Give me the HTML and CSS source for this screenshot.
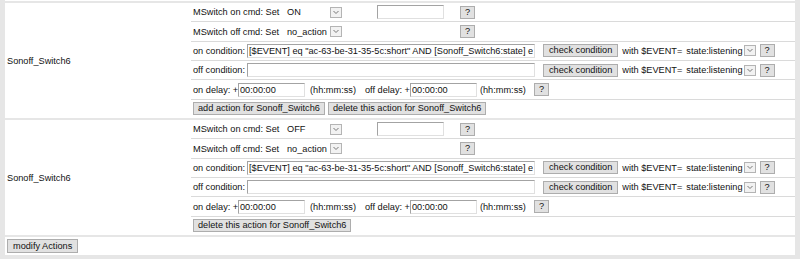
FILE: index.html
```html
<!DOCTYPE html>
<html lang="en">
<head>
    <meta charset="UTF-8">
    <title>MSwitch Actions</title>
    <link rel="stylesheet" href="styles.css">
</head>
<body>
    <div class="page">
        <div class="cut"></div>

        <!-- first action -->
        <div class="device">
            <div class="device-name">Sonoff_Switch6</div>
            <div class="device-cmds">
                <div class="cmd-line">
                    <span class="set-label">MSwitch on cmd: Set</span>
                    <span class="set-cell">
                        <span class="select set-select"><span class="select-value">ON</span><span class="select-arrow"><svg width="10" height="9" viewBox="0 0 10 9"><polyline points="2.5,3 5,5.5 7.5,3" fill="none" stroke="#777" stroke-width="1"/></svg></span></span>
                    </span>
                    <span class="args-cell"><input class="field args-field" type="text" value=""></span>
                    <button class="btn help">?</button>
                </div>
                <div class="cmd-line">
                    <span class="set-label">MSwitch off cmd: Set</span>
                    <span class="set-cell">
                        <span class="select set-select"><span class="select-value">no_action</span><span class="select-arrow"><svg width="10" height="9" viewBox="0 0 10 9"><polyline points="2.5,3 5,5.5 7.5,3" fill="none" stroke="#777" stroke-width="1"/></svg></span></span>
                    </span>
                    <span class="args-cell"></span>
                    <button class="btn help">?</button>
                </div>
                <div class="cmd-line">
                    <span class="cond-label">on condition:</span>
                    <input class="field cond-field" type="text" value='[$EVENT] eq "ac-63-be-31-35-5c:short" AND [Sonoff_Switch6:state] eq "off"'>
                    <button class="btn check">check condition</button>
                    <span class="event-label">with $EVENT=</span>
                    <span class="select event-select"><span class="select-value">state:listening</span><span class="select-arrow"><svg width="10" height="9" viewBox="0 0 10 9"><polyline points="2.5,3 5,5.5 7.5,3" fill="none" stroke="#777" stroke-width="1"/></svg></span></span>
                    <button class="btn help near">?</button>
                </div>
                <div class="cmd-line">
                    <span class="cond-label">off condition:</span>
                    <input class="field cond-field" type="text" value="">
                    <button class="btn check">check condition</button>
                    <span class="event-label">with $EVENT=</span>
                    <span class="select event-select"><span class="select-value">state:listening</span><span class="select-arrow"><svg width="10" height="9" viewBox="0 0 10 9"><polyline points="2.5,3 5,5.5 7.5,3" fill="none" stroke="#777" stroke-width="1"/></svg></span></span>
                    <button class="btn help near">?</button>
                </div>
                <div class="cmd-line">
                    <span class="delay-label">on delay: +</span>
                    <input class="field delay-field" type="text" value="00:00:00">
                    <span class="unit">(hh:mm:ss)</span>
                    <span class="delay-label off">off delay: +</span>
                    <input class="field delay-field" type="text" value="00:00:00">
                    <span class="unit tight">(hh:mm:ss)</span>
                    <button class="btn help delay-help">?</button>
                </div>
                <div class="cmd-line">
                    <button class="btn action">add action for Sonoff_Switch6</button>
                    <button class="btn action">delete this action for Sonoff_Switch6</button>
                </div>
            </div>
        </div>

        <!-- second action -->
        <div class="device">
            <div class="device-name">Sonoff_Switch6</div>
            <div class="device-cmds">
                <div class="cmd-line">
                    <span class="set-label">MSwitch on cmd: Set</span>
                    <span class="set-cell">
                        <span class="select set-select"><span class="select-value">OFF</span><span class="select-arrow"><svg width="10" height="9" viewBox="0 0 10 9"><polyline points="2.5,3 5,5.5 7.5,3" fill="none" stroke="#777" stroke-width="1"/></svg></span></span>
                    </span>
                    <span class="args-cell"><input class="field args-field" type="text" value=""></span>
                    <button class="btn help">?</button>
                </div>
                <div class="cmd-line">
                    <span class="set-label">MSwitch off cmd: Set</span>
                    <span class="set-cell">
                        <span class="select set-select"><span class="select-value">no_action</span><span class="select-arrow"><svg width="10" height="9" viewBox="0 0 10 9"><polyline points="2.5,3 5,5.5 7.5,3" fill="none" stroke="#777" stroke-width="1"/></svg></span></span>
                    </span>
                    <span class="args-cell"></span>
                    <button class="btn help">?</button>
                </div>
                <div class="cmd-line">
                    <span class="cond-label">on condition:</span>
                    <input class="field cond-field" type="text" value='[$EVENT] eq "ac-63-be-31-35-5c:short" AND [Sonoff_Switch6:state] eq "on"'>
                    <button class="btn check">check condition</button>
                    <span class="event-label">with $EVENT=</span>
                    <span class="select event-select"><span class="select-value">state:listening</span><span class="select-arrow"><svg width="10" height="9" viewBox="0 0 10 9"><polyline points="2.5,3 5,5.5 7.5,3" fill="none" stroke="#777" stroke-width="1"/></svg></span></span>
                    <button class="btn help near">?</button>
                </div>
                <div class="cmd-line">
                    <span class="cond-label">off condition:</span>
                    <input class="field cond-field" type="text" value="">
                    <button class="btn check">check condition</button>
                    <span class="event-label">with $EVENT=</span>
                    <span class="select event-select"><span class="select-value">state:listening</span><span class="select-arrow"><svg width="10" height="9" viewBox="0 0 10 9"><polyline points="2.5,3 5,5.5 7.5,3" fill="none" stroke="#777" stroke-width="1"/></svg></span></span>
                    <button class="btn help near">?</button>
                </div>
                <div class="cmd-line">
                    <span class="delay-label">on delay: +</span>
                    <input class="field delay-field" type="text" value="00:00:00">
                    <span class="unit">(hh:mm:ss)</span>
                    <span class="delay-label off">off delay: +</span>
                    <input class="field delay-field" type="text" value="00:00:00">
                    <span class="unit tight">(hh:mm:ss)</span>
                    <button class="btn help delay-help">?</button>
                </div>
                <div class="cmd-line">
                    <button class="btn action">delete this action for Sonoff_Switch6</button>
                </div>
            </div>
        </div>

        <div class="footer">
            <button class="btn modify">modify Actions</button>
        </div>
    </div>
</body>
</html>
```

FILE: styles.css
```css
* {
    box-sizing: border-box;
}
body {
    margin: 0;
    background-color: #e6e6e6;
    font-family: "Liberation Sans", Arial, sans-serif;
    font-size: 9.2px;
    color: #111;
}
.page {
    padding: 0 5px;
}
.cut {
    height: 1px;
    background-color: #fff;
    margin-bottom: 2px;
}
.device {
    display: flex;
    background-color: #fff;
    margin-bottom: 2px;
}
.device-name {
    width: 186px;
    padding-left: 2px;
    display: flex;
    align-items: center;
}
.device-cmds {
    flex: 1;
}
.cmd-line {
    height: 19.35px;
    border-bottom: 1px solid #dadada;
    display: flex;
    align-items: center;
    padding-left: 2px;
    white-space: nowrap;
}
.cmd-line:last-child {
    height: 18.35px;
    border-bottom: none;
}

/* form controls */
.btn {
    font-family: "Liberation Sans", Arial, sans-serif;
    font-size: 9.2px;
    color: #111;
    height: 13px;
    line-height: 11px;
    padding: 0 5px;
    margin: 0;
    background-color: #e1e1e1;
    border: 1px solid #adadad;
    border-radius: 0;
}
.field {
    font-family: "Liberation Sans", Arial, sans-serif;
    font-size: 9.2px;
    color: #111;
    height: 14px;
    padding: 0 1px;
    margin: 0;
    background-color: #fff;
    border: 1px solid;
    border-color: #a3a3a3 #e0e0e0 #e0e0e0 #a3a3a3;
    outline: none;
}
.select {
    display: inline-flex;
    align-items: center;
}
.select-value {
    flex: 1;
}
.select-arrow {
    width: 12px;
    height: 11px;
    border: 1px solid #b4b4b4;
    background-color: #f2f2f2;
    display: flex;
    align-items: center;
    justify-content: center;
}

/* set rows */
.set-label {
    width: 91px;
}
.set-cell {
    width: 93px;
}
.set-select {
    width: 58px;
    padding-left: 3px;
}
.args-cell {
    width: 83px;
}
.args-field {
    width: 67px;
}
.help {
    padding: 0 4px;
}

/* condition rows */
.cond-label {
    width: 54px;
}
.cond-field {
    width: 288px;
}
.check {
    margin-left: 8px;
}
.event-label {
    margin-left: 4px;
}
.event-select {
    margin-left: 4px;
}
.event-select .select-value {
    margin-right: 1px;
}
.help.near {
    margin-left: 4px;
}

/* delay row */
.delay-label {
    width: 45px;
}
.delay-label.off {
    margin-left: 9px;
}
.delay-field {
    width: 67px;
}
.unit {
    margin-left: 5px;
}
.unit.tight {
    margin-left: 3px;
}
.delay-help {
    margin-left: 8px;
}

/* buttons row */
.action {
    padding: 0 4px;
    margin-right: 3px;
}
.footer {
    background-color: #fff;
    height: 18px;
    display: flex;
    align-items: center;
    padding-left: 2px;
}
.modify {
    height: 14px;
}
```
